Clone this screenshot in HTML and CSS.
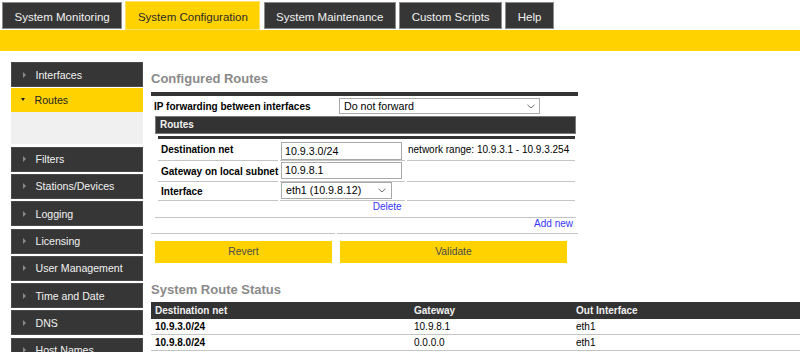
FILE: index.html
```html
<!DOCTYPE html>
<html>
<head>
<meta charset="utf-8">
<title>System Configuration - Routes</title>
<link rel="stylesheet" href="styles.css">
</head>
<body>
<nav class="tabs">
  <a class="tab">System Monitoring</a>
  <a class="tab active">System Configuration</a>
  <a class="tab">System Maintenance</a>
  <a class="tab">Custom Scripts</a>
  <a class="tab">Help</a>
</nav>
<div class="bar"></div>
<div class="page">
  <aside class="side">
    <div class="item first"><span class="arr"></span>Interfaces</div>
    <div class="item open"><span class="arr down"></span>Routes</div>
    <div class="sub"></div>
    <div class="item"><span class="arr"></span>Filters</div>
    <div class="item"><span class="arr"></span>Stations/Devices</div>
    <div class="item"><span class="arr"></span>Logging</div>
    <div class="item"><span class="arr"></span>Licensing</div>
    <div class="item"><span class="arr"></span>User Management</div>
    <div class="item"><span class="arr"></span>Time and Date</div>
    <div class="item"><span class="arr"></span>DNS</div>
    <div class="item"><span class="arr"></span>Host Names</div>
  </aside>
  <main class="main">
    <h2 class="title">Configured Routes</h2>
    <div class="form">
      <div class="fwd">
        <span class="fwd-label">IP forwarding between interfaces</span>
        <div class="select sel-wide">Do not forward<svg class="chev" width="8" height="5" viewBox="0 0 8 5"><path d="M0.5 0.8 L4 4 L7.5 0.8" fill="none" stroke="#6d6d6d" stroke-width="1"/></svg></div>
      </div>
      <div class="routes">
        <div class="routes-head">Routes</div>
        <div class="rgrid">
          <div class="c lbl">Destination net</div>
          <div class="c"><div class="input in1">10.9.3.0/24</div></div>
          <div class="c note">network range: 10.9.3.1 - 10.9.3.254</div>

          <div class="c lbl">Gateway on local subnet</div>
          <div class="c"><div class="input in2">10.9.8.1</div></div>
          <div class="c"></div>

          <div class="c lbl">Interface</div>
          <div class="c"><div class="select sel-if">eth1 (10.9.8.12)<svg class="chev" width="8" height="5" viewBox="0 0 8 5"><path d="M0.5 0.8 L4 4 L7.5 0.8" fill="none" stroke="#6d6d6d" stroke-width="1"/></svg></div></div>
          <div class="c"></div>
        </div>
        <div class="delrow"><a class="link">Delete</a></div>
      </div>
      <div class="addrow">
        <div class="addcell"></div>
        <div class="addcell right"><a class="link">Add new</a></div>
      </div>
    </div>
    <div class="buttons">
      <button class="btn revert">Revert</button>
      <button class="btn validate">Validate</button>
    </div>

    <h2 class="title status-title">System Route Status</h2>
    <table class="status">
      <thead>
        <tr><th class="col1">Destination net</th><th class="col2">Gateway</th><th class="col3">Out Interface</th></tr>
      </thead>
      <tbody>
        <tr><td class="b">10.9.3.0/24</td><td>10.9.8.1</td><td>eth1</td></tr>
        <tr><td class="b">10.9.8.0/24</td><td>0.0.0.0</td><td>eth1</td></tr>
      </tbody>
    </table>
  </main>
</div>
</body>
</html>
```

FILE: styles.css
```css
* { box-sizing: border-box; }
html, body { margin: 0; padding: 0; background: #fff; }
body {
  width: 800px;
  height: 352px;
  overflow: hidden;
  font-family: "Liberation Sans", Arial, sans-serif;
  font-size: 10px;
  color: #000;
}

/* top tabs */
.tabs {
  display: flex;
  align-items: flex-start;
  gap: 3.2px;
  height: 30px;
  padding: 2px 0 0 2px;
}
.tab {
  height: 27px;
  padding: 1.5px 11.5px 0;
  border: 1px solid #8c8c8c;
  background: #363636;
  color: #f2f2f2;
  font-size: 11.5px;
  line-height: 24px;
  white-space: nowrap;
}
.tab.active {
  height: 29px;
  margin-top: -1px;
  padding-top: 2.5px;
  background: #ffd200;
  border-color: #ffe16a;
  color: #2b2b2b;
}
.bar { height: 21px; background: #ffd200; }

/* layout */
.page { display: flex; align-items: flex-start; }

/* sidebar */
.side { width: 132px; margin: 11px 0 0 11px; flex: none; }
.item {
  display: flex;
  align-items: center;
  height: 25px;
  margin-bottom: 2.3px;
  background: #363636;
  border: 1px solid #4a4a4a;
  color: #f2f2f2;
  font-size: 10.6px;
  white-space: nowrap;
}
.item.first { margin-bottom: 1.3px; }
.item.open {
  height: 23.4px;
  margin-bottom: 0;
  background: #ffd200;
  border-color: #ffd200;
  color: #222;
}
.sub { height: 32.6px; margin-bottom: 2.4px; background: #f0f0f0; }
.arr {
  width: 0;
  height: 0;
  margin: 0 9.5px 0 11px;
  border-left: 3px solid #8a8a8a;
  border-top: 3px solid transparent;
  border-bottom: 3px solid transparent;
}
.arr.down {
  margin: 0 9.5px 0 9px;
  border-left: 2.5px solid transparent;
  border-right: 2.5px solid transparent;
  border-top: 3px solid #1a1a1a;
  border-bottom: 0;
}

/* main */
.main { margin-left: 8px; flex: 1; min-width: 0; }
.title {
  margin: 20px 0 5px;
  font-size: 13px;
  line-height: 16px;
  font-weight: bold;
  color: #8a8a8a;
}

.form { width: 427px; border-top: 4px solid #333; }
.fwd { display: flex; align-items: center; height: 20px; }
.fwd-label { width: 188px; padding-left: 3px; font-weight: bold; white-space: nowrap; }

.select {
  position: relative;
  height: 16px;
  border: 1px solid #a9a9a9;
  background: #fff;
  font-size: 10.67px;
  line-height: 14px;
  padding-left: 4px;
  white-space: nowrap;
}
.sel-wide { width: 201px; }
.sel-wide .chev { right: 4px; }
.sel-if {
  width: 111px;
  height: 17px;
  line-height: 15px;
  margin: 0 0 1px 1px;
  align-self: flex-end;
}
.chev { position: absolute; right: 5px; top: 5px; }

.routes { margin-left: 4px; width: 421px; }
.routes-head {
  height: 18px;
  background: #333;
  border: 1px solid #7a7a7a;
  color: #f0f0f0;
  font-weight: bold;
  line-height: 16px;
  padding-left: 4px;
}
.rgrid {
  display: grid;
  grid-template-columns: 120px 125px 168px;
  grid-template-rows: 22.3px 20.7px 19.3px;
  column-gap: 2px;
  margin: 2px 0 0 3px;
  width: 417px;
  border-top: 3px solid #333;
}
.c {
  display: flex;
  align-items: center;
  border-bottom: 1px solid #c4c4c4;
  white-space: nowrap;
}
.c.lbl { font-weight: bold; padding-left: 3px; }
.c.note { padding-left: 1px; }
.input {
  align-self: flex-end;
  width: 121px;
  margin-left: 1px;
  border: 1px solid #a9a9a9;
  font-size: 10.67px;
  padding-left: 3px;
}
.in1 { height: 18.3px; line-height: 16px; }
.in2 { height: 17px; line-height: 15px; margin-bottom: 1.7px; }

.delrow {
  height: 16.7px;
  border-bottom: 1px solid #c4c4c4;
  padding-left: 217.7px;
  line-height: 12px;
}
.link { color: #3535ff; font-size: 10px; }
.addrow { display: flex; gap: 2px; height: 15.7px; }
.addcell { border-bottom: 1px solid #c4c4c4; line-height: 12px; }
.addcell:first-child { width: 184px; }
.addcell.right { flex: 1; text-align: right; padding-right: 5px; }

.buttons { display: flex; gap: 8px; margin: 7.3px 0 0 4px; }
.btn {
  height: 22px;
  border: 0;
  background: #ffd200;
  color: #4a4a4a;
  font-family: "Liberation Sans", Arial, sans-serif;
  font-size: 10.3px;
  padding: 0;
}
.revert { width: 177px; }
.validate { width: 227px; }

.status-title { margin: 19px 0 4px; }
.status { width: 649px; border-collapse: collapse; }
.status th {
  height: 17px;
  padding: 0 0 0 4px;
  background: #333;
  color: #f0f0f0;
  font-weight: bold;
  text-align: left;
}
.status td {
  height: 16px;
  padding: 0 0 0 4px;
  border-bottom: 1px solid #c4c4c4;
}
.status td.b { font-weight: bold; }
.col1 { width: 259px; }
.col2 { width: 162px; }
```
